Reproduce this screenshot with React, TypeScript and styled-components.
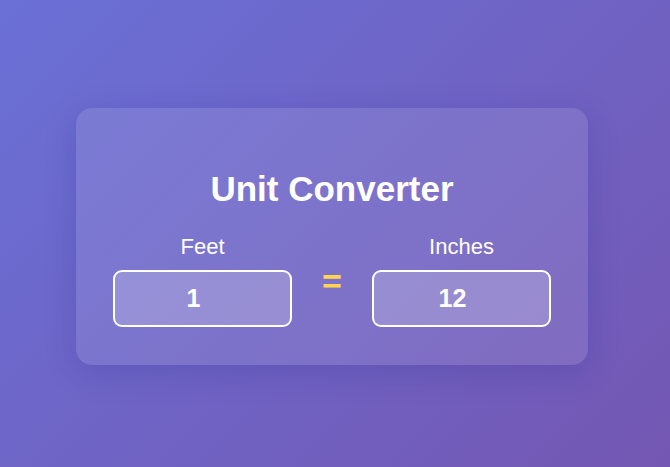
import React from "react";
import styled, { createGlobalStyle } from "styled-components";

const GlobalStyle = createGlobalStyle`
  html, body {
    margin: 0;
    padding: 0;
  }
  body {
    font-family: "Liberation Sans", Arial, sans-serif;
  }
`;

const Page = styled.div`
  width: 100vw;
  height: 100vh;
  display: flex;
  align-items: center;
  justify-content: center;
  background: linear-gradient(135deg, #6a70d6 0%, #7457b3 100%);
`;

const Card = styled.div`
  width: 512px;
  box-sizing: border-box;
  padding: 61px 37px 38px;
  margin: 6px 6px 0 0;
  border-radius: 16px;
  background: rgba(255, 255, 255, 0.1);
  box-shadow: 0 8px 32px rgba(31, 38, 135, 0.2);
  display: flex;
  flex-direction: column;
  align-items: center;
  color: #fff;
`;

const Title = styled.h1`
  margin: 0 0 25px;
  font-size: 35px;
  font-weight: 700;
  line-height: 40px;
`;

const Row = styled.div`
  width: 100%;
  display: flex;
  align-items: center;
  justify-content: space-between;
`;

const Column = styled.div`
  width: 179px;
  display: flex;
  flex-direction: column;
  align-items: center;
`;

const Label = styled.label`
  font-size: 22px;
  line-height: 25px;
  margin-bottom: 11px;
`;

const Field = styled.input`
  width: 179px;
  height: 57px;
  box-sizing: border-box;
  border: 2px solid #fff;
  border-radius: 9px;
  background: rgba(255, 255, 255, 0.2);
  color: #fff;
  font-family: "Liberation Sans", Arial, sans-serif;
  font-size: 25px;
  font-weight: 700;
  text-align: center;
  outline: none;
  padding: 0 18px 0 0;
`;

const Equals = styled.span`
  font-size: 34px;
  font-weight: 700;
  color: #ffd54f;
  line-height: 1;
`;

export default function App() {
  return (
    <>
      <GlobalStyle />
      <Page>
        <Card>
          <Title>Unit Converter</Title>
          <Row>
            <Column>
              <Label>Feet</Label>
              <Field type="text" defaultValue="1" />
            </Column>
            <Equals>=</Equals>
            <Column>
              <Label>Inches</Label>
              <Field type="text" defaultValue="12" />
            </Column>
          </Row>
        </Card>
      </Page>
    </>
  );
}
